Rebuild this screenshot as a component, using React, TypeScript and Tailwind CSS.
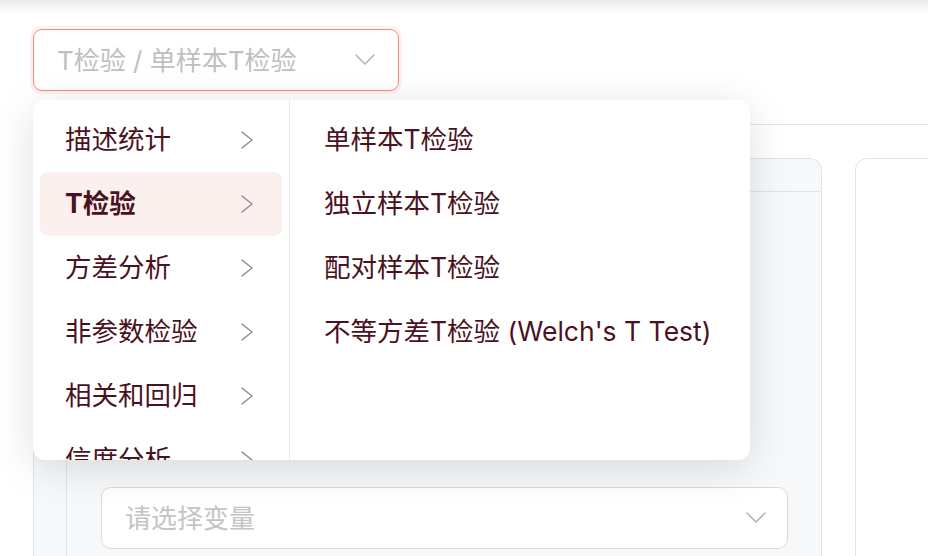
import React from "react";

const FONT = { fontFamily: '"Inter", "Noto Sans CJK SC", sans-serif' };

function ChevronRight() {
  return (
    <svg width="14" height="20" viewBox="0 0 14 20" fill="none">
      <path d="M2 2 L12 10 L2 18" stroke="#8f8f8f" strokeWidth="1.6" strokeLinecap="round" strokeLinejoin="round" />
    </svg>
  );
}

function ChevronDown({ color = "#b5b5b5" }: { color?: string }) {
  return (
    <svg width="22" height="14" viewBox="0 0 22 14" fill="none">
      <path d="M2 2 L11 11 L20 2" stroke={color} strokeWidth="1.6" strokeLinecap="round" strokeLinejoin="round" />
    </svg>
  );
}

const left = ["描述统计", "T检验", "方差分析", "非参数检验", "相关和回归", "信度分析"];
const right = ["单样本T检验", "独立样本T检验", "配对样本T检验", "不等方差T检验 (Welch's T Test)"];

export default function App() {
  return (
    <div className="relative w-[928px] h-[556px] overflow-hidden bg-white" style={FONT}>
      <div className="h-[14px] bg-gradient-to-b from-[#e9e9e9] via-[#f7f7f7] to-white" />
      <div className="pl-[33px] pt-[15px]">
        <div className="flex items-center justify-between w-[366px] h-[62px] rounded-[9px] border-[1.5px] border-[#ea8b86] shadow-[0_0_0_3px_#fdf0ef] pl-[23px] pr-[22px]">
          <span className="text-[26px] text-[#bfbfbf]">T检验 / 单样本T检验</span>
          <ChevronDown />
        </div>
      </div>
      <div className="ml-[33px] mt-[33px] border-t border-[#e4e4e8] pt-[33px] flex gap-[33px]">
        <div className="w-[789px] h-[420px] shrink-0 rounded-tr-[12px] rounded-tl-[12px] border border-[#e2e3e7] bg-[#f7f8fa] pl-[32px] pt-[32px]">
          <div className="h-full rounded-tl-[12px] border-l border-t border-[#e2e3e7] bg-[#f7f8fa] pl-[34px] pr-[33px] pt-[295px]">
            <div className="flex items-center justify-between h-[62px] rounded-[10px] border border-[#d9d9d9] bg-white pl-[23px] pr-[20px]">
              <span className="text-[26px] text-[#c4c4c4]">请选择变量</span>
              <ChevronDown />
            </div>
          </div>
        </div>
        <div className="w-[200px] h-[420px] shrink-0 rounded-tl-[12px] border border-[#e2e3e7] bg-white" />
      </div>

      <div className="absolute left-[33px] top-[100px] w-[717px] h-[360px] flex rounded-[12px] bg-white shadow-[0_8px_40px_rgba(0,0,0,0.13)] overflow-hidden">
        <div className="w-[257px] h-full border-r border-[#e8e8e8] px-[7px] pt-[8px] overflow-hidden">
          {left.map((t, i) => (
            <div
              key={t}
              className={`flex items-center justify-between h-[64px] rounded-[8px] pl-[25px] pr-[28px] ${i === 1 ? "bg-[#fcf0ef]" : ""}`}
            >
              <span className={`text-[26.5px] text-[#4a1220] ${i === 1 ? "font-bold" : ""}`}>{t}</span>
              <ChevronRight />
            </div>
          ))}
        </div>
        <div className="flex-1 pt-[8px] pl-[34px]">
          {right.map((t) => (
            <div key={t} className="flex items-center h-[64px]">
              <span className="text-[26.5px] text-[#4a1220] whitespace-nowrap">{t}</span>
            </div>
          ))}
        </div>
      </div>
    </div>
  );
}
